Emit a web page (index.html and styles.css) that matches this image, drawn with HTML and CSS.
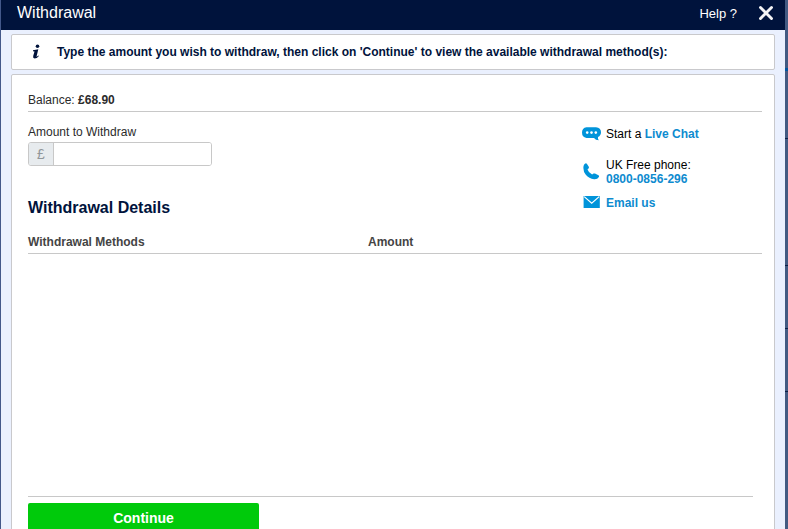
FILE: index.html
```
<!DOCTYPE html>
<html lang="en">
<head>
<meta charset="utf-8">
<title>Withdrawal</title>
<link rel="stylesheet" href="styles.css">
</head>
<body>
<div class="dialog">
  <header class="titlebar">
    <h1 class="title">Withdrawal</h1>
    <a class="help">Help ?</a>
    <svg class="close" width="16" height="16" viewBox="0 0 16 16"><path d="M2.5 2.5L13.5 13.5M13.5 2.5L2.5 13.5" stroke="#f4f4f6" stroke-width="2.9" stroke-linecap="round"/></svg>
  </header>
  <div class="notice">
    <svg class="info" width="9" height="16" viewBox="0 0 9 16"><circle cx="5.5" cy="2.2" r="1.8"/><path d="M1 6.3L6.3 5.3 4.6 12.2Q4.5 13 5.1 12.6L6.3 11.4 6.9 11.9Q4.8 14.6 2.6 14.6 .6 14.4 1.2 12.1L2.5 7.5 1 7.2Z"/></svg>
    <p class="notice-text">Type the amount you wish to withdraw, then click on 'Continue' to view the available withdrawal method(s):</p>
  </div>
  <main class="panel">
    <div class="balance">Balance:&nbsp;<b>£68.90</b></div>
    <div class="columns">
      <section class="form">
        <label class="label" for="amount">Amount to Withdraw</label>
        <div class="field"><span class="currency">£</span><input class="amount" id="amount" type="text"></div>
        <h2 class="heading">Withdrawal Details</h2>
      </section>
      <aside class="contact">
        <div class="contact-row chat">
          <svg width="20" height="14" viewBox="0 0 20 14"><path d="M5.5 .2H15Q20 .6 20 5.3 20 8.6 17 10 16.6 11.8 17.8 13.3 14.6 13.2 13 10.9H5.5Q1 10.4 1 5.6 1 .8 5.5 .2Z" fill="#0094da"/><circle cx="6.2" cy="5.6" r="1.3" fill="#fff"/><circle cx="10.5" cy="5.6" r="1.3" fill="#fff"/><circle cx="14.8" cy="5.6" r="1.3" fill="#fff"/></svg>
          <span>Start a <b>Live Chat</b></span>
        </div>
        <div class="contact-row phone">
          <svg width="20" height="18" viewBox="0 0 20 18"><path d="M3.9 .7Q5.2 -.2 6 1L7.8 3.8Q8.2 4.8 7.5 5.5L6.5 6.5Q7.7 9.8 11.1 11.6L12.5 10.6Q13.3 10.2 14 10.6L17.5 12.3Q18.4 12.9 17.9 14 16.4 16.5 13.1 16.2 8 15.6 4.8 11.8 1.8 8 2.5 3.2 2.8 1.5 3.9 .7Z" fill="#0094da"/></svg>
          <span>UK Free phone:<br><b>0800-0856-296</b></span>
        </div>
        <div class="contact-row mail">
          <svg width="20" height="14" viewBox="0 0 20 14"><path d="M2.6 0H18.8V12H2.6Z" fill="#0094da"/><path d="M3.2 .6L10.7 7.3 18.2 .6" fill="none" stroke="#fff" stroke-width="1.2"/></svg>
          <b>Email us</b>
        </div>
      </aside>
    </div>
    <div class="table-head"><span class="methods">Withdrawal Methods</span><span class="sum">Amount</span></div>
    <div class="table-body"></div>
    <button class="continue">Continue</button>
  </main>
</div>
<div class="backdrop-edge"></div>
</body>
</html>
```
FILE: styles.css
```
* { box-sizing: border-box; }
body {
  margin: 0;
  height: 529px;
  padding-left: 1px;
  overflow: hidden;
  display: flex;
  background: #43588a;
  font: 12px/14px "Liberation Sans", Arial, sans-serif;
  color: #2b2b2b;
  white-space: nowrap;
}
.dialog { width: 784px; height: 529px; background: #eaf0fe; overflow: hidden; }
.backdrop-edge {
  width: 3px;
  height: 529px;
  background:
    linear-gradient(#0054a0, #0054a0) 0 68px / 3px 3px no-repeat,
    linear-gradient(#0b1f47, #0b1f47) 0 138px / 3px 1px no-repeat,
    linear-gradient(#0b1f47, #0b1f47) 0 265px / 3px 1px no-repeat,
    linear-gradient(#0b1f47, #0b1f47) 0 328px / 3px 1px no-repeat,
    linear-gradient(#0b1f47, #0b1f47) 0 391px / 3px 1px no-repeat,
    #425a82;
}
.titlebar {
  height: 30px;
  padding: 0 11px 4px 16px;
  display: flex;
  align-items: center;
  background: #00133c;
  color: #fff;
}
.title { margin: 0; flex: 1; font-size: 16px; font-weight: 400; line-height: 20px; }
.help { font-size: 13px; margin-right: 21px; padding-top: 1px; }
.close { display: block; }
.notice {
  height: 36px;
  margin: 4px 10px;
  padding-left: 20px;
  display: flex;
  align-items: center;
  background: #fff;
  border: 1px solid #c9c9cc;
  border-radius: 2px;
}
.info { fill: #00133c; margin-right: 16px; }
.notice-text { margin: 0; font-weight: 700; color: #00133c; }
.panel {
  height: 470px;
  margin: 0 10px;
  padding: 18px 12px 0 16px;
  background: #fff;
  border: 1px solid #c9c9cc;
  border-radius: 2px;
}
.balance { height: 19px; border-bottom: 1px solid #c8c8c8; }
.columns { display: flex; height: 120px; }
.form { width: 553px; }
.label { display: block; margin-top: 13px; height: 17px; }
.field {
  width: 184px;
  height: 24px;
  display: flex;
  border: 1px solid #c8c8c8;
  border-radius: 3px;
  overflow: hidden;
}
.currency {
  width: 25px;
  line-height: 23px;
  text-align: center;
  background: #e7ebee;
  border-right: 1px solid #c8c8c8;
  color: #919699;
  font-size: 14px;
}
.amount { flex: 1; min-width: 0; border: 0; padding: 0 6px; outline: 0; }
.heading { margin: 32px 0 0; font-size: 16px; line-height: 20px; color: #00133c; }
.contact { color: #000; }
.contact b { color: #0e8bcf; }
.contact-row { display: flex; align-items: center; gap: 5px; }
.chat { margin-top: 15px; }
.phone { margin-top: 17px; }
.mail { margin-top: 10px; }
.table-head {
  height: 22px;
  display: flex;
  padding-top: 3px;
  border-bottom: 1px solid #c8c8c8;
  font-weight: 700;
  color: #444;
}
.methods { width: 340px; }
.table-body { height: 243px; margin-right: 9px; border-bottom: 1px solid #c8c8c8; }
.continue {
  display: block;
  width: 231px;
  height: 31px;
  margin-top: 6px;
  padding: 0 0 2px;
  border: 0;
  border-radius: 2px;
  background: #00ca0b;
  color: #fff;
  font: 700 14px/28px "Liberation Sans", Arial, sans-serif;
}
```
